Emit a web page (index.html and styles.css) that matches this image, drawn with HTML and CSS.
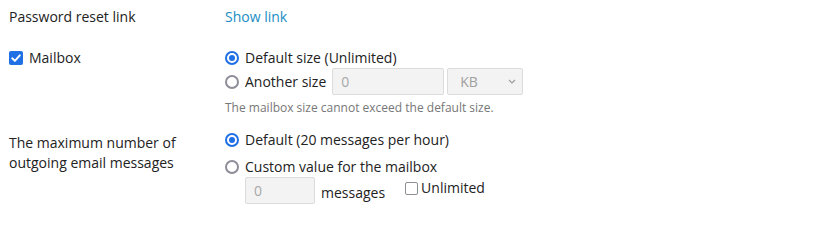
FILE: index.html
```html
<!DOCTYPE html>
<html>
<head>
<meta charset="utf-8">
<link rel="stylesheet" href="styles.css">
</head>
<body>
<div class="form">
  <div class="row row-link">
    <div class="label">Password reset link</div>
    <div class="field"><a class="link" href="#">Show link</a></div>
  </div>

  <div class="row row-mailbox">
    <div class="label">
      <span class="check checked"><svg viewBox="0 0 14 14" width="14" height="14"><path d="M3.2 7.3 L5.9 9.9 L10.8 4.3" fill="none" stroke="#fff" stroke-width="1.9" stroke-linecap="round" stroke-linejoin="round"/></svg></span>
      <span>Mailbox</span>
    </div>
    <div class="field">
      <div class="opt opt-first"><span class="radio on"></span><span>Default size (Unlimited)</span></div>
      <div class="opt opt-size">
        <span class="radio"></span><span>Another size</span>
        <span class="input input-size">0</span>
        <span class="select">KB<svg class="chev" viewBox="0 0 8 5" width="8" height="5"><path d="M1 1 L4 4 L7 1" fill="none" stroke="#999" stroke-width="1.1"/></svg></span>
      </div>
      <div class="hint">The mailbox size cannot exceed the default size.</div>
    </div>
  </div>

  <div class="row row-outgoing">
    <div class="label label-multi">The maximum number of<br>outgoing email messages</div>
    <div class="field">
      <div class="opt"><span class="radio on"></span><span>Default (20 messages per hour)</span></div>
      <div class="opt opt-custom"><span class="radio"></span><span>Custom value for the mailbox</span></div>
      <div class="sub">
        <span class="input input-msg">0</span>
        <span class="unit">messages</span>
        <span class="unl"><span class="check small"></span><span>Unlimited</span></span>
      </div>
    </div>
  </div>
</div>
</body>
</html>
```

FILE: styles.css
```css
html, body {
  margin: 0;
  padding: 0;
  background: #ffffff;
}
body {
  font-family: "Open Sans", "Liberation Sans", sans-serif;
  font-size: 14px;
  color: #222222;
  line-height: 20px;
}
.form {
  padding: 7px 0 0 9px;
}
.row {
  display: grid;
  grid-template-columns: 216px 1fr;
}
.row-mailbox {
  margin-top: 21px;
}
.row-outgoing {
  margin-top: 13px;
}
.label {
  display: flex;
  align-items: flex-start;
  gap: 6px;
}
.row-mailbox .label {
  align-items: center;
  height: 20px;
}
.label-multi {
  display: block;
  padding-top: 3px;
}
.link {
  color: #1a8dc2;
  text-decoration: none;
}
.check {
  width: 14px;
  height: 14px;
  box-sizing: border-box;
  border-radius: 2px;
  display: inline-flex;
  align-items: center;
  justify-content: center;
  flex: none;
}
.check.checked {
  background: #1f6fe5;
}
.check.small {
  width: 13px;
  height: 13px;
  border: 1px solid #8e8e97;
  border-radius: 2px;
  background: #fff;
}
.opt {
  display: flex;
  align-items: center;
  gap: 6px;
  height: 20px;
}
.radio {
  width: 14px;
  height: 14px;
  box-sizing: border-box;
  border-radius: 50%;
  border: 2px solid #8e8e99;
  background: #fff;
  flex: none;
  position: relative;
}
.radio.on {
  border-color: #1f6fe5;
}
.radio.on::after {
  content: "";
  position: absolute;
  left: 2px;
  top: 2px;
  width: 6px;
  height: 6px;
  border-radius: 50%;
  background: #1f6fe5;
}
.opt-size {
  height: 27px;
}
.input {
  box-sizing: border-box;
  height: 27px;
  border: 1px solid #dcdcdc;
  background: #f3f3f3;
  color: #a8a8a8;
  border-radius: 2px;
  padding: 0 8px;
  display: inline-flex;
  align-items: center;
}
.input-size {
  width: 112px;
}
.select {
  box-sizing: border-box;
  height: 27px;
  width: 76px;
  margin-left: -3px;
  border: 1px solid #dcdcdc;
  background: #f3f3f3;
  color: #a0a0a0;
  border-radius: 2px;
  padding: 0 6px 0 12px;
  display: inline-flex;
  align-items: center;
  justify-content: space-between;
}
.hint {
  font-size: 12px;
  color: #777777;
  margin-top: 4px;
  line-height: 18px;
}
.opt-custom {
  margin-top: 7px;
}
.sub {
  display: flex;
  align-items: center;
  padding-left: 20px;
  height: 27px;
}
.input-msg {
  width: 70px;
}
.unit {
  margin-left: 6px;
  padding-top: 4px;
}
.unl {
  display: inline-flex;
  align-items: center;
  gap: 3px;
  margin-left: 20px;
  margin-top: -5px;
}
```
